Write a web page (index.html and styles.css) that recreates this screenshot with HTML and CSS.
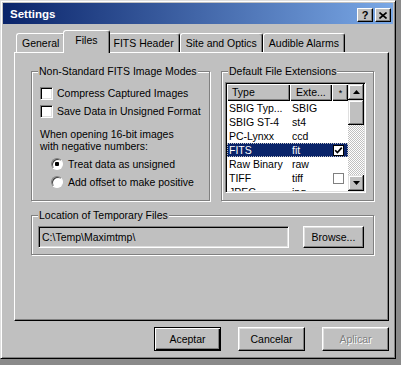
FILE: index.html
```html
<!DOCTYPE html>
<html lang="es">
<head>
    <meta charset="UTF-8">
    <title>Settings</title>
    <link rel="stylesheet" href="styles.css">
</head>
<body>
    <div class="window">
        <div class="titlebar">
            <span class="title">Settings</span>
            <div class="tb-buttons">
                <div class="tb-btn help">?</div>
                <div class="tb-btn">
                    <svg width="8" height="7" viewBox="0 0 8 7"><path d="M0.5 0.5 L7.5 6.5 M7.5 0.5 L0.5 6.5" stroke="#000" stroke-width="1.6" fill="none"/></svg>
                </div>
            </div>
        </div>

        <div class="tabs">
            <div class="tab">General</div>
            <div class="tab active">Files</div>
            <div class="tab">FITS Header</div>
            <div class="tab">Site and Optics</div>
            <div class="tab">Audible Alarms</div>
        </div>

        <div class="panel">
            <div class="groups">
                <fieldset class="group g-modes">
                    <legend>Non-Standard FITS Image Modes</legend>
                    <div class="opts">
                        <div class="check-row"><span class="box"></span>Compress Captured Images</div>
                        <div class="check-row"><span class="box"></span>Save Data in Unsigned Format</div>
                        <p class="note">When opening 16-bit images<br>with negative numbers:</p>
                        <div class="radios">
                            <div class="radio-row"><span class="radio on"></span>Treat data as unsigned</div>
                            <div class="radio-row"><span class="radio"></span>Add offset to make positive</div>
                        </div>
                    </div>
                </fieldset>

                <fieldset class="group g-ext">
                    <legend>Default File Extensions</legend>
                    <div class="listview">
                        <div class="lv-main">
                            <div class="lv-head">
                                <span class="c-type">Type</span>
                                <span class="c-ext">Exte...</span>
                                <span class="c-chk">*</span>
                            </div>
                            <div class="lv-row"><span class="c-type">SBIG Typ...</span><span class="c-ext">SBIG</span><span class="c-chk"></span></div>
                            <div class="lv-row"><span class="c-type">SBIG ST-4</span><span class="c-ext">st4</span><span class="c-chk"></span></div>
                            <div class="lv-row"><span class="c-type">PC-Lynxx</span><span class="c-ext">ccd</span><span class="c-chk"></span></div>
                            <div class="lv-row sel"><span class="c-type">FITS</span><span class="c-ext">fit</span><span class="c-chk"><span class="mini">
                                <svg width="9" height="9" viewBox="0 0 9 9"><path d="M1.2 4.2 L3.4 6.6 L7.8 1.6" stroke="#000" stroke-width="1.7" fill="none"/></svg>
                            </span></span></div>
                            <div class="lv-row"><span class="c-type">Raw Binary</span><span class="c-ext">raw</span><span class="c-chk"></span></div>
                            <div class="lv-row"><span class="c-type">TIFF</span><span class="c-ext">tiff</span><span class="c-chk"><span class="mini"></span></span></div>
                            <div class="lv-row"><span class="c-type">JPEG</span><span class="c-ext">jpg</span><span class="c-chk"></span></div>
                        </div>
                        <div class="scrollbar">
                            <div class="sb-btn">
                                <svg width="7" height="4" viewBox="0 0 7 4"><polygon points="0,4 3.5,0 7,4" fill="#000"/></svg>
                            </div>
                            <div class="sb-thumb"></div>
                            <div class="sb-space"></div>
                            <div class="sb-btn">
                                <svg width="7" height="4" viewBox="0 0 7 4"><polygon points="0,0 7,0 3.5,4" fill="#000"/></svg>
                            </div>
                        </div>
                    </div>
                </fieldset>
            </div>

            <fieldset class="group g-temp">
                <legend>Location of Temporary Files</legend>
                <div class="path-row">
                    <div class="path-field">C:\Temp\Maximtmp\</div>
                    <div class="btn browse">Browse...</div>
                </div>
            </fieldset>
        </div>

        <div class="actions">
            <div class="btn big default">Aceptar</div>
            <div class="btn big">Cancelar</div>
            <div class="btn big disabled">Aplicar</div>
        </div>
    </div>
</body>
</html>
```

FILE: styles.css
```css
* {
    box-sizing: border-box;
}
html, body {
    margin: 0;
}
body {
    background: #8a8a8a;
    font-family: "Liberation Sans", Arial, sans-serif;
    font-size: 10.5px;
    color: #000;
}
.window {
    width: 396px;
    height: 359px;
    background: #c0c0c0;
    border: 1px solid;
    border-color: #dfdfdf #000 #000 #dfdfdf;
    box-shadow: inset 1px 1px #fff, inset -1px -1px #808080;
    padding: 2px;
}

/* title bar */
.titlebar {
    height: 21px;
    display: flex;
    align-items: flex-end;
    justify-content: space-between;
    background: linear-gradient(to right, #0a246a, #7aa8e6);
    padding: 0 2px 2px 7px;
}
.title {
    color: #fff;
    font-weight: bold;
    font-size: 11.5px;
    align-self: center;
    padding-top: 2px;
}
.tb-buttons {
    display: flex;
    gap: 2px;
}
.tb-btn {
    width: 16px;
    height: 14px;
    background: #c0c0c0;
    border: 1px solid;
    border-color: #fff #000 #000 #fff;
    box-shadow: inset -1px -1px #808080;
    display: flex;
    align-items: center;
    justify-content: center;
}
.tb-btn.help {
    font-weight: bold;
    font-size: 11px;
    line-height: 12px;
}

/* tabs */
.tabs {
    display: flex;
    align-items: flex-end;
    height: 22px;
    margin: 6px 0 0 13px;
}
.tab {
    height: 19px;
    padding: 0 5px;
    border: 1px solid;
    border-bottom: 0;
    border-color: #fff #000 transparent #fff;
    box-shadow: inset -1px 0 #808080;
    border-radius: 3px 3px 0 0;
    line-height: 18px;
    white-space: nowrap;
}
.tab.active {
    height: 23px;
    margin: 0 -2px -1px;
    padding: 0 11px;
    position: relative;
    z-index: 1;
    background: #c0c0c0;
    line-height: 19px;
}

/* panel */
.panel {
    width: 375px;
    height: 269px;
    margin-left: 11px;
    border: 1px solid;
    border-color: #fff #000 #000 #fff;
    box-shadow: inset -1px -1px #808080;
    padding: 12px 0 0 16px;
}
.groups {
    display: flex;
    gap: 11px;
}
.group {
    margin: 0;
    min-width: 0;
    border: 1px solid #808080;
    box-shadow: inset 1px 1px #fff, 1px 1px #fff;
    padding: 6px 8px 9px 6px;
}
.group legend {
    padding: 0 1px;
    line-height: 13px;
    background: #c0c0c0;
}

/* image modes */
.g-modes {
    width: 179px;
}
.opts {
    margin-left: 2px;
}
.check-row {
    display: flex;
    align-items: center;
    gap: 4px;
    height: 18px;
    white-space: nowrap;
}
.box {
    width: 13px;
    height: 13px;
    background: #fff;
    border: 1px solid;
    border-color: #808080 #fff #fff #808080;
    box-shadow: inset 1px 1px #000, inset -1px -1px #dfdfdf;
}
.note {
    margin: 8px 0 0;
    line-height: 12px;
}
.radios {
    margin-top: 3px;
    padding-left: 11px;
}
.radio-row {
    display: flex;
    align-items: center;
    gap: 5px;
    height: 18px;
    white-space: nowrap;
}
.radio {
    width: 12px;
    height: 12px;
    border-radius: 50%;
    background: #fff;
    border: 1px solid;
    border-color: #808080 #fff #fff #808080;
    box-shadow: inset 1px 1px #404040;
}
.radio.on {
    background: radial-gradient(circle, #000 0 2px, #fff 2.5px);
}

/* file extensions list */
.g-ext {
    width: 153px;
    padding: 4px 0 0 3px;
}
.g-ext legend {
    margin-left: 3px;
}
.listview {
    display: flex;
    width: 141px;
    height: 111px;
    background: #fff;
    border: 1px solid;
    border-color: #808080 #fff #fff #808080;
    box-shadow: inset 1px 1px #000, inset -1px -1px #dfdfdf;
    padding: 1px;
}
.lv-main {
    width: 121px;
    overflow: hidden;
}
.lv-head {
    display: flex;
    height: 17px;
    background: #c0c0c0;
}
.lv-head span {
    line-height: 16px;
    box-shadow: inset 1px 1px #fff, inset -1px -1px #000, inset -2px -2px #808080;
}
.lv-head .c-type {
    padding-left: 5px;
}
.lv-head .c-ext {
    padding-left: 6px;
}
.lv-head .c-chk {
    justify-content: center;
    font-size: 9px;
}
.lv-row {
    display: flex;
    height: 14px;
    line-height: 14px;
}
.c-type {
    width: 63px;
    padding-left: 2px;
    white-space: nowrap;
    overflow: hidden;
}
.c-ext {
    width: 42px;
    padding-left: 2px;
    white-space: nowrap;
}
.c-chk {
    width: 16px;
    display: flex;
    align-items: center;
    padding-left: 1px;
}
.lv-row.sel {
    background: #0a246a;
    color: #fff;
    outline: 1px dotted #c0c0c0;
    outline-offset: -1px;
}
.mini {
    width: 11px;
    height: 11px;
    background: #fff;
    border: 1px solid #808080;
    display: flex;
    align-items: center;
    justify-content: center;
}
.sel .mini {
    border-color: #000;
}
.scrollbar {
    width: 16px;
    display: flex;
    flex-direction: column;
    background: repeating-conic-gradient(#fff 0 25%, #c0c0c0 0 50%) 0 0 / 2px 2px;
}
.sb-btn, .sb-thumb {
    background: #c0c0c0;
    box-shadow: inset -1px -1px #000, inset 1px 1px #dfdfdf, inset -2px -2px #808080, inset 2px 2px #fff;
}
.sb-btn {
    height: 16px;
    display: flex;
    align-items: center;
    justify-content: center;
}
.sb-thumb {
    height: 25px;
}
.sb-space {
    flex: 1;
}

/* temporary files */
.g-temp {
    width: 343px;
    margin-top: 8px;
    padding: 4px 9px 6px 6px;
}
.path-row {
    display: flex;
    align-items: center;
    gap: 14px;
}
.path-field {
    width: 251px;
    height: 22px;
    border: 1px solid;
    border-color: #808080 #fff #fff #808080;
    box-shadow: inset 1px 1px #000, inset -1px -1px #dfdfdf;
    padding-left: 3px;
    line-height: 20px;
}

/* buttons */
.btn {
    height: 22px;
    background: #c0c0c0;
    border: 1px solid;
    border-color: #fff #000 #000 #fff;
    box-shadow: inset -1px -1px #808080, inset 1px 1px #dfdfdf;
    display: flex;
    align-items: center;
    justify-content: center;
}
.browse {
    width: 61px;
}
.actions {
    display: flex;
    justify-content: flex-end;
    gap: 17px;
    width: 375px;
    margin: 6px 0 0 11px;
}
.btn.big {
    width: 67px;
    height: 24px;
}
.btn.default {
    border-color: #000;
    box-shadow: inset 1px 1px #fff, inset -1px -1px #000, inset -2px -2px #808080;
}
.btn.disabled {
    color: #808080;
    text-shadow: 1px 1px #fff;
}
```
